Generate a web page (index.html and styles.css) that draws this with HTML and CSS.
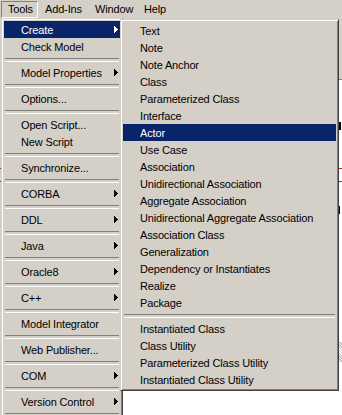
FILE: index.html
```html
<!DOCTYPE html>
<html>
<head>
<meta charset="utf-8">
<link rel="stylesheet" href="styles.css">
</head>
<body>
<div class="screen">
  <div class="menubar">
    <span class="mb-item mb-tools">Tools</span>
    <span class="mb-item mb-addins">Add-Ins</span>
    <span class="mb-item mb-window">Window</span>
    <span class="mb-item mb-help">Help</span>
  </div>
  <div class="app">
    <div class="toolbar"></div>
    <div class="canvas">
      <span class="mark mark-a"></span>
      <span class="mark mark-r1"></span>
      <span class="mark mark-r2"></span>
      <span class="mark mark-l1"></span>
      <span class="mark mark-l2"></span>
      <span class="mark mark-b"></span>
      <span class="mark mark-h"></span>
    </div>
  </div>

  <div class="menu menu-tools">
    <div class="item active"><span>Create</span><svg class="arrow" width="4" height="7" viewBox="0 0 4 7"><path d="M0 0h1v7h-1zM1 1h1v5h-1zM2 2h1v3h-1zM3 3h1v1h-1z"/></svg></div>
    <div class="item"><span>Check Model</span></div>
    <div class="sep"></div>
    <div class="item"><span>Model Properties</span><svg class="arrow" width="4" height="7" viewBox="0 0 4 7"><path d="M0 0h1v7h-1zM1 1h1v5h-1zM2 2h1v3h-1zM3 3h1v1h-1z"/></svg></div>
    <div class="sep"></div>
    <div class="item"><span>Options...</span></div>
    <div class="sep"></div>
    <div class="item"><span>Open Script...</span></div>
    <div class="item"><span>New Script</span></div>
    <div class="sep"></div>
    <div class="item"><span>Synchronize...</span></div>
    <div class="sep"></div>
    <div class="item"><span>CORBA</span><svg class="arrow" width="4" height="7" viewBox="0 0 4 7"><path d="M0 0h1v7h-1zM1 1h1v5h-1zM2 2h1v3h-1zM3 3h1v1h-1z"/></svg></div>
    <div class="sep"></div>
    <div class="item"><span>DDL</span><svg class="arrow" width="4" height="7" viewBox="0 0 4 7"><path d="M0 0h1v7h-1zM1 1h1v5h-1zM2 2h1v3h-1zM3 3h1v1h-1z"/></svg></div>
    <div class="sep"></div>
    <div class="item"><span>Java</span><svg class="arrow" width="4" height="7" viewBox="0 0 4 7"><path d="M0 0h1v7h-1zM1 1h1v5h-1zM2 2h1v3h-1zM3 3h1v1h-1z"/></svg></div>
    <div class="sep"></div>
    <div class="item"><span>Oracle8</span><svg class="arrow" width="4" height="7" viewBox="0 0 4 7"><path d="M0 0h1v7h-1zM1 1h1v5h-1zM2 2h1v3h-1zM3 3h1v1h-1z"/></svg></div>
    <div class="sep"></div>
    <div class="item"><span>C++</span><svg class="arrow" width="4" height="7" viewBox="0 0 4 7"><path d="M0 0h1v7h-1zM1 1h1v5h-1zM2 2h1v3h-1zM3 3h1v1h-1z"/></svg></div>
    <div class="sep"></div>
    <div class="item"><span>Model Integrator</span></div>
    <div class="sep"></div>
    <div class="item"><span>Web Publisher...</span></div>
    <div class="sep"></div>
    <div class="item"><span>COM</span><svg class="arrow" width="4" height="7" viewBox="0 0 4 7"><path d="M0 0h1v7h-1zM1 1h1v5h-1zM2 2h1v3h-1zM3 3h1v1h-1z"/></svg></div>
    <div class="sep"></div>
    <div class="item"><span>Version Control</span><svg class="arrow" width="4" height="7" viewBox="0 0 4 7"><path d="M0 0h1v7h-1zM1 1h1v5h-1zM2 2h1v3h-1zM3 3h1v1h-1z"/></svg></div>
    <div class="sep"></div>
    <div class="tail"></div>
  </div>

  <div class="menu menu-create">
    <div class="item"><span>Text</span></div>
    <div class="item"><span>Note</span></div>
    <div class="item"><span>Note Anchor</span></div>
    <div class="item"><span>Class</span></div>
    <div class="item"><span>Parameterized Class</span></div>
    <div class="item"><span>Interface</span></div>
    <div class="item active"><span>Actor</span></div>
    <div class="item"><span>Use Case</span></div>
    <div class="item"><span>Association</span></div>
    <div class="item"><span>Unidirectional Association</span></div>
    <div class="item"><span>Aggregate Association</span></div>
    <div class="item"><span>Unidirectional Aggregate Association</span></div>
    <div class="item"><span>Association Class</span></div>
    <div class="item"><span>Generalization</span></div>
    <div class="item"><span>Dependency or Instantiates</span></div>
    <div class="item"><span>Realize</span></div>
    <div class="item"><span>Package</span></div>
    <div class="sep"></div>
    <div class="item"><span>Instantiated Class</span></div>
    <div class="item"><span>Class Utility</span></div>
    <div class="item"><span>Parameterized Class Utility</span></div>
    <div class="item"><span>Instantiated Class Utility</span></div>
  </div>
</div>
</body>
</html>
```

FILE: styles.css
```css
* { box-sizing: border-box; }

body {
  margin: 0;
  font-family: "Liberation Sans", Arial, sans-serif;
  font-size: 11px;
  color: #000;
}

.screen {
  position: relative;
  width: 342px;
  height: 415px;
  overflow: hidden;
  background: #d4d0c8;
}

/* menu bar */
.menubar {
  display: flex;
  height: 18px;
  padding: 1px 0 0 1px;
  background: #d4d0c8;
}

.mb-item {
  height: 17px;
  line-height: 15px;
  padding-left: 6px;
  border: 1px solid transparent;
  letter-spacing: -0.15px;
  white-space: nowrap;
}

.mb-tools {
  width: 37px;
  border-color: #808080 #fff #fff #808080;
}

.mb-addins { width: 50px; }
.mb-window { width: 49px; }
.mb-help { width: 40px; }

/* background application */
.app {
  display: flex;
  flex-direction: column;
  height: 397px;
}

.toolbar {
  height: 61px;
  background: #d4d0c8;
}

.canvas {
  position: relative;
  flex: 1;
  margin-left: 1px;
  background: #fff;
  border-top: 1px solid #808080;
}

.mark { position: absolute; display: block; }
.mark-a { left: 338px; top: 42px; width: 2px; height: 8px; background: #000; }
.mark-r1 { left: 336px; top: 88px; width: 6px; height: 1px; background: #a0303a; }
.mark-r2 { left: 336px; top: 101px; width: 6px; height: 1px; background: #a0303a; }
.mark-l1 { left: -1px; top: 88px; width: 2px; height: 1px; background: #a0303a; }
.mark-l2 { left: -1px; top: 101px; width: 2px; height: 1px; background: #a0303a; }
.mark-b { left: 338px; top: 126px; width: 1px; height: 8px; background: #000; }
.mark-h { left: 338px; top: 262px; width: 4px; height: 20px; background: repeating-linear-gradient(45deg, #c0c0c0 0 1px, #fff 1px 2px); }

/* menus */
.menu {
  position: absolute;
  padding: 2px;
  background: #d4d0c8;
  border: 1px solid;
  border-color: #d4d0c8 #404040 #404040 #d4d0c8;
  box-shadow: inset 1px 1px #fff, inset -1px -1px #808080;
  letter-spacing: -0.15px;
}

.menu-tools {
  left: 1px;
  top: 18px;
  width: 122px;
}

.menu-create {
  left: 120px;
  top: 19px;
  width: 219px;
}

.item {
  display: flex;
  align-items: center;
  height: 17px;
  padding-left: 17px;
  padding-right: 2px;
  white-space: nowrap;
}

.item.active {
  background: #0a246a;
  color: #fff;
}

.arrow {
  margin-left: auto;
  fill: currentColor;
  shape-rendering: crispEdges;
}

.sep {
  height: 9px;
  padding: 3px 1px 0;
}

.sep::before {
  content: "";
  display: block;
  height: 2px;
  border-top: 1px solid #808080;
  border-bottom: 1px solid #fff;
}

.tail {
  height: 17px;
}
```
